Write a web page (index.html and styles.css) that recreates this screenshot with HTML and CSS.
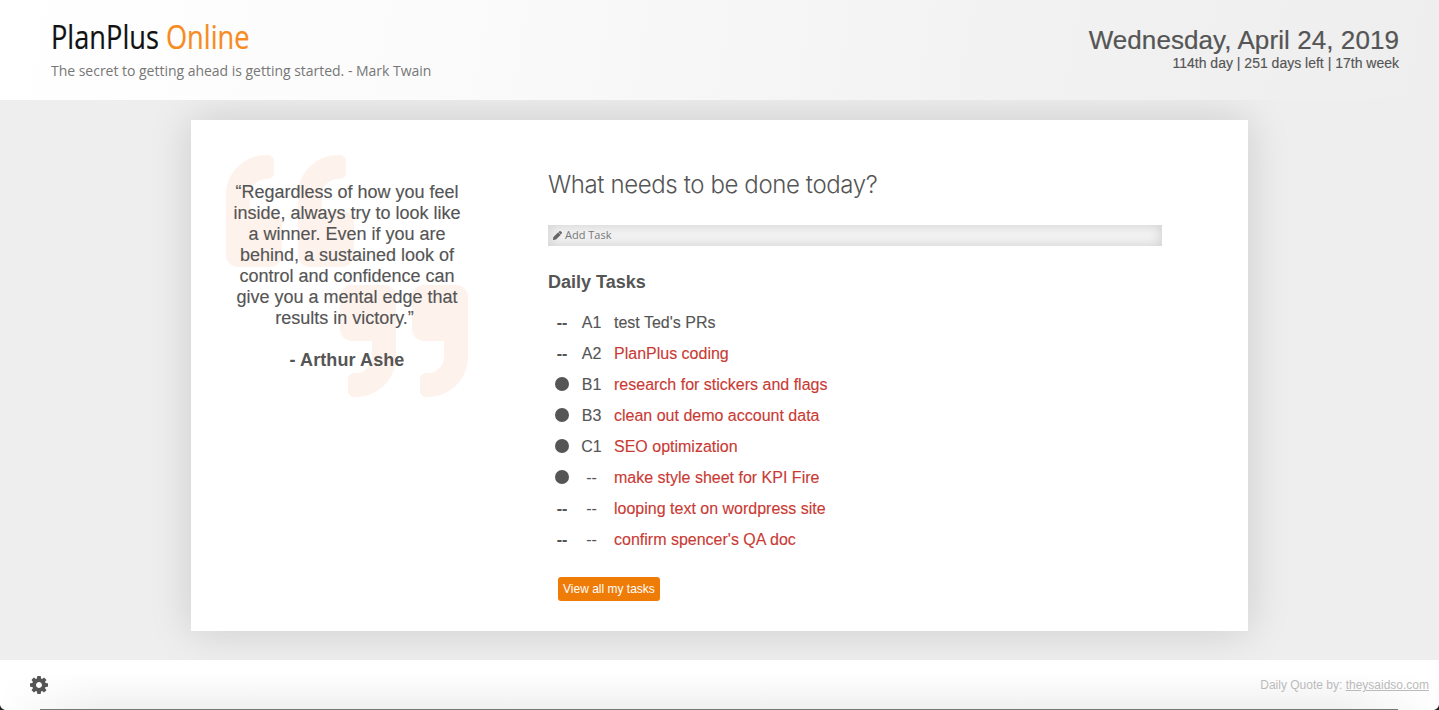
FILE: index.html
```html
<!DOCTYPE html>
<html lang="en">
<head>
<meta charset="utf-8">
<title>PlanPlus Online</title>
<link rel="stylesheet" href="styles.css">
</head>
<body>
<div class="page">
  <header class="header">
    <div class="brand">
      <div class="logo">PlanPlus <span class="logo-online">Online</span></div>
      <div class="tagline">The secret to getting ahead is getting started. - Mark Twain</div>
    </div>
    <div class="today">
      <div class="date">Wednesday, April 24, 2019</div>
      <div class="day-info">114th day <span class="bar">|</span> 251 days left <span class="bar">|</span> 17th week</div>
    </div>
  </header>
  <main class="main">
    <div class="card">
      <section class="quote">
        <svg class="mark mark-open" viewBox="0 0 512 512"><path d="M464 256h-80v-64c0-35.300 28.700-64 64-64h8c13.300 0 24-10.700 24-24V56c0-13.300-10.700-24-24-24h-8c-88.400 0-160 71.600-160 160v240c0 26.500 21.500 48 48 48h128c26.500 0 48-21.500 48-48V304c0-26.500-21.500-48-48-48zm-288 0H96v-64c0-35.300 28.700-64 64-64h8c13.300 0 24-10.700 24-24V56c0-13.300-10.700-24-24-24h-8C71.600 32 0 103.600 0 192v240c0 26.500 21.500 48 48 48h128c26.500 0 48-21.500 48-48V304c0-26.500-21.500-48-48-48z"/></svg>
        <svg class="mark mark-close" viewBox="0 0 512 512"><path d="M464 32H336c-26.500 0-48 21.500-48 48v128c0 26.500 21.500 48 48 48h80v64c0 35.300-28.700 64-64 64h-8c-13.300 0-24 10.700-24 24v48c0 13.300 10.700 24 24 24h8c88.400 0 160-71.600 160-160V80c0-26.500-21.500-48-48-48zm-288 0H48C21.500 32 0 53.500 0 80v128c0 26.500 21.500 48 48 48h80v64c0 35.300-28.700 64-64 64h-8c-13.300 0-24 10.700-24 24v48c0 13.300 10.700 24 24 24h8c88.400 0 160-71.600 160-160V80c0-26.500-21.500-48-48-48z"/></svg>
        <p class="quote-text">“Regardless of how you feel<br>inside, always try to look like<br>a winner. Even if you are<br>behind, a sustained look of<br>control and confidence can<br>give you a mental edge that<br><span class="last-line">results in victory.”</span></p>
        <p class="quote-author">- Arthur Ashe</p>
      </section>
      <section class="tasks">
        <h1 class="title">What needs to be done today?</h1>
        <div class="add-task">
          <svg class="pencil" viewBox="0 0 512 512"><path d="M498 142l-46 46c-5 5-13 5-17 0L324 77c-5-5-5-12 0-17l46-46c19-19 49-19 68 0l60 60c19 19 19 49 0 68zM284 80L22 342 0 484c-3 16 12 30 28 28l142-22 262-262c5-5 5-13 0-17L301 80c-4-5-12-5-17 0z"/></svg>
          <span class="add-label">Add Task</span>
        </div>
        <h2 class="subtitle">Daily Tasks</h2>
        <ul class="list">
          <li class="task"><span class="status">--</span><span class="rank">A1</span><span class="name current">test Ted's PRs</span></li>
          <li class="task"><span class="status">--</span><span class="rank">A2</span><span class="name">PlanPlus coding</span></li>
          <li class="task"><span class="status"><i class="dot"></i></span><span class="rank">B1</span><span class="name">research for stickers and flags</span></li>
          <li class="task"><span class="status"><i class="dot"></i></span><span class="rank">B3</span><span class="name">clean out demo account data</span></li>
          <li class="task"><span class="status"><i class="dot"></i></span><span class="rank">C1</span><span class="name">SEO optimization</span></li>
          <li class="task"><span class="status"><i class="dot"></i></span><span class="rank">--</span><span class="name">make style sheet for KPI Fire</span></li>
          <li class="task"><span class="status">--</span><span class="rank">--</span><span class="name">looping text on wordpress site</span></li>
          <li class="task"><span class="status">--</span><span class="rank">--</span><span class="name">confirm spencer's QA doc</span></li>
        </ul>
        <a class="button">View all my tasks</a>
      </section>
    </div>
  </main>
  <footer class="footer">
    <svg class="cog" viewBox="0 0 1536 1536"><path fill-rule="evenodd" transform="translate(0 128)" d="M1024 640q0 106-75 181t-181 75-181-75-75-181 75-181 181-75 181 75 75 181zm512-109v222q0 12-8 23t-20 13l-185 28q-19 54-39 91 35 50 107 138 10 12 10 25t-9 23q-27 37-99 108t-94 71q-12 0-26-9l-138-108q-44 23-91 38-16 136-29 186-7 28-36 28h-222q-14 0-24.500-8.500t-11.500-21.500l-28-184q-49-16-90-37l-141 107q-10 9-25 9-14 0-25-11-126-114-165-168-7-10-7-23 0-12 8-23 15-21 51-66.500t54-70.500q-27-50-41-99l-183-27q-13-2-21-12.500t-8-23.500v-222q0-12 8-23t19-13l186-28q14-46 39-92-40-57-107-138-10-12-10-24 0-10 9-23 26-36 98.500-107.500t94.500-71.500q13 0 26 10l138 107q44-23 91-38 16-136 29-186 7-28 36-28h222q14 0 24.500 8.500t11.500 21.500l28 184q49 16 90 37l142-107q9-9 24-9 13 0 25 10 129 119 165 170 7 8 7 22 0 12-8 23-15 21-51 66.500t-54 70.500q26 50 41 98l183 28q13 2 21 12.500t8 23.500z"/></svg>
    <div class="credit">Daily Quote by: <a class="credit-link">theysaidso.com</a></div>
    <svg class="corner corner-left" viewBox="0 0 5 5"><path d="M0 0Q1 4 5 5H0z"/></svg>
    <svg class="corner corner-right" viewBox="0 0 5 5"><path d="M5 0Q4 4 0 5H5z"/></svg>
  </footer>
</div>
</body>
</html>
```
FILE: styles.css
```css
* { box-sizing: border-box; }
body {
  margin: 0;
  background: #eee;
  color: #555;
  font-family: "Liberation Sans", Arial, sans-serif;
}
.page {
  display: flex;
  flex-direction: column;
  height: 710px;
  overflow: hidden;
}
.header {
  display: flex;
  justify-content: space-between;
  height: 100px;
  padding: 17px 40px 0 51px;
  background: linear-gradient(100deg, #fff 0%, #fbfbfb 30%, #f2f2f2 70%, #eee 100%);
}
.logo {
  width: max-content;
  font: 32px/40px "Open Sans", sans-serif;
  color: #111;
  -webkit-text-stroke: 0.2px;
  transform: scaleX(0.85);
  transform-origin: left;
}
.logo-online { color: #f68b1f; }
.tagline {
  margin-top: 4px;
  font: 14px/20px "Open Sans", sans-serif;
  letter-spacing: -0.02px;
  color: #777;
}
.today { padding-top: 7px; text-align: right; }
.date { font-size: 26px; line-height: 32px; letter-spacing: 0.08px; -webkit-text-stroke: 0.2px #555; }
.day-info { font-size: 14px; line-height: 15px; -webkit-text-stroke: 0.15px #555; }
.main { flex: 1; padding: 20px 191px 0; overflow: hidden; }
.card {
  display: flex;
  height: 511px;
  background: #fff;
  box-shadow: 0 0 40px rgba(0, 0, 0, 0.15);
}
.quote {
  position: relative;
  width: 312px;
  padding-top: 62px;
  text-align: center;
  font-size: 18px;
  line-height: 21px;
}
.mark { position: absolute; width: 128px; height: 128px; fill: #fef2ec; }
.mark-open { left: 35px; top: 27px; }
.mark-close { left: 149px; top: 157px; }
.quote-text, .quote-author { position: relative; margin: 0; }
.quote-text { -webkit-text-stroke: 0.15px #555; }
.last-line { padding-right: 5px; }
.quote-author { margin-top: 21px; font-weight: bold; letter-spacing: 0.1px; }
.tasks { width: 614px; margin-left: 45px; padding-top: 49px; }
.title {
  margin: 0;
  font: 300 24px/32px Inter, sans-serif;
  letter-spacing: -0.39px;
}
.add-task {
  display: flex;
  align-items: center;
  gap: 3px;
  height: 21px;
  margin-top: 24px;
  padding-left: 5px;
  background: #f5f5f5;
  box-shadow: inset 0 0 14px rgba(0, 0, 0, 0.17);
  font: 11px/18px "Open Sans", sans-serif;
  color: #777;
}
.add-label { padding-bottom: 2px; }
.pencil { width: 9px; height: 9px; fill: #666; }
.subtitle { margin: 25px 0 0; font-size: 18px; line-height: 22px; }
.list { margin: 14px 0 0; padding: 0; list-style: none; }
.task {
  display: grid;
  grid-template-columns: 28px 31px 1fr;
  align-items: center;
  height: 31px;
  font-size: 16px;
  -webkit-text-stroke: 0.12px;
}
.status { display: flex; justify-content: center; font-weight: bold; }
.rank { text-align: center; }
.dot { width: 14px; height: 14px; margin-bottom: 1px; border-radius: 50%; background: #555; }
.name { padding-left: 7px; color: #c93a34; }
.current { color: #555; }
.button {
  display: inline-block;
  margin: 22px 0 0 10px;
  padding: 0 5px;
  border-radius: 3px;
  background: #f07c08;
  color: #fff;
  font-size: 12px;
  line-height: 24px;
}
.footer {
  position: relative;
  display: flex;
  justify-content: space-between;
  height: 50px;
  padding: 16px 10px 0 30px;
  background: linear-gradient(#fff 25%, #f0f0f0);
}
.footer::before {
  content: "";
  position: absolute;
  inset: 0;
  background: linear-gradient(90deg, #fff, transparent 7%, transparent 93%, #fff);
}
.footer::after {
  content: "";
  position: absolute;
  left: 40px;
  right: 41px;
  bottom: 0;
  height: 1px;
  background: #777;
}
.cog { position: relative; width: 18px; height: 18px; fill: #555; }
.credit { position: relative; font-size: 12px; line-height: 18px; color: #bbb; }
.credit-link { text-decoration: underline; }
.corner { position: absolute; bottom: 0; width: 5px; height: 5px; fill: #222; }
.corner-left { left: 0; }
.corner-right { right: 0; }
```
